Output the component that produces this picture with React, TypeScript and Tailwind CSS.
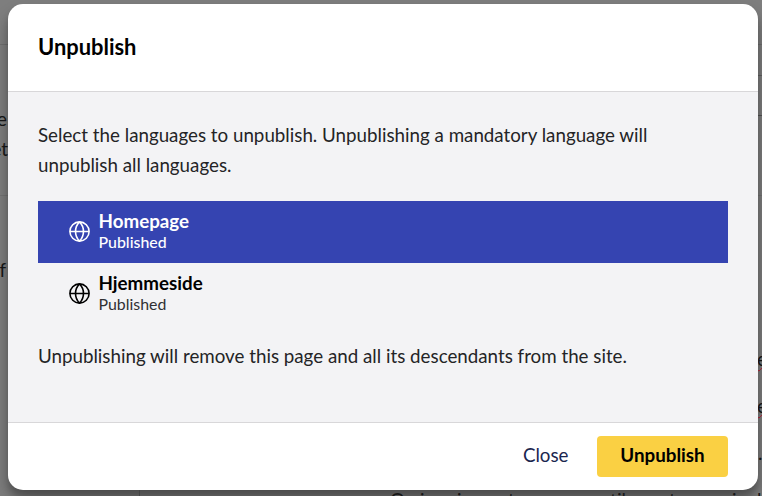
import React from "react";

type Language = { name: string; state: string; selected: boolean };

const languages: Language[] = [
  { name: "Homepage", state: "Published", selected: true },
  { name: "Hjemmeside", state: "Published", selected: false },
];

function Globe() {
  return (
    <svg className="size-[21px] shrink-0" viewBox="0 0 21 21" fill="none" stroke="currentColor" strokeWidth="1.6">
      <circle cx="10.5" cy="10.5" r="9.6" />
      <path d="M0.9 10.5H20.1M10.5 0.9C5.2 6.2 5.2 14.8 10.5 20.1C15.8 14.8 15.8 6.2 10.5 0.9" />
    </svg>
  );
}

function LanguageRow({ name, state, selected }: Language) {
  return (
    <button
      className={`flex h-[62px] w-full items-center gap-[8.5px] pb-[1px] pl-[31px] text-left ${
        selected ? "bg-[#3544b1] text-white" : "text-black"
      }`}
    >
      <Globe />
      <span className="flex flex-col pb-[2px]">
        <span className="text-[18.75px] leading-[21px] font-bold">{name}</span>
        <span className={`text-[15.9px] leading-[21px] ${selected ? "font-medium" : "text-[#303033]"}`}>{state}</span>
      </span>
    </button>
  );
}

function LeftEdge() {
  return (
    <div className="flex w-2 flex-col items-end overflow-hidden">
      <div className="mt-10 h-px w-full shrink-0 bg-[#707070]" />
      <span className="mt-[62px] pr-px">e</span>
      <span className="mt-[6px]">et</span>
      <div className="mt-[34px] h-px w-full shrink-0 bg-[#747474]" />
      <span className="mt-[62px] pr-[2px]">f</span>
    </div>
  );
}

function RightEdge() {
  return (
    <div className="relative -z-10 flex w-1 flex-col overflow-hidden">
      <div className="mt-10 h-px w-full shrink-0 bg-[#707070]" />
      <div className="mt-[30px] h-px w-full shrink-0 bg-[#636363]" />
      <div className="mt-[39px] h-px w-full shrink-0 bg-[#555555]" />
      <div className="mt-[79px] h-px w-full shrink-0 bg-[#747474]" />
      <span className="-ml-px mt-[151px] underline decoration-[#c01830] decoration-wavy decoration-1">e</span>
      <span className="-ml-px mt-[23px] underline decoration-[#c01830] decoration-wavy decoration-1">e</span>
      <span className="mt-[23px]">.</span>
    </div>
  );
}

function BottomEdge() {
  return (
    <div className="flex h-[6px] overflow-hidden">
      <div className="ml-[139px] h-full w-px shrink-0 bg-[#444444]" />
      <p className="ml-[250px] -mt-[2px] flex">
        <span className="w-[30px]">O</span>
        <span className="w-[37px]">i</span>
        <span className="w-[51px]">i</span>
        <span className="w-[102px]">t</span>
        <span className="w-[59px]">til</span>
        <span className="w-[63px]">t</span>
        <span className="w-[25px]">i</span>
        <span>l</span>
      </p>
    </div>
  );
}

export default function App() {
  return (
    <div className="isolate flex h-[496px] w-[762px] flex-col overflow-hidden bg-[#7f7f7f] pt-1 font-['Lato',sans-serif] text-[18.75px] leading-[24px] text-[#171717]">
      <div className="flex h-[486px] shrink-0">
        <LeftEdge />
        <div className="flex w-[750px] shrink-0 flex-col overflow-hidden rounded-[15px] bg-white shadow-[0_12px_25px_rgba(0,0,0,0.24),0_7px_7px_rgba(0,0,0,0.23)]">
          <header className="flex h-[88px] shrink-0 items-center border-b border-[#d8d7d9] px-[30px] pb-px">
            <h1 className="text-[21.9px] leading-[28px] font-bold text-black">Unpublish</h1>
          </header>
          <main className="flex-1 bg-[#f3f3f5] px-[30px] pt-[28px] leading-[30px] text-[#242426]">
            <p>
              Select the languages to unpublish. Unpublishing a mandatory language will
              <br />
              unpublish all languages.
            </p>
            <div className="mt-[21px]">
              {languages.map((language) => (
                <LanguageRow key={language.name} {...language} />
              ))}
            </div>
            <p className="mt-4">Unpublishing will remove this page and all its descendants from the site.</p>
          </main>
          <footer className="flex h-[68px] shrink-0 items-center justify-end gap-[28.5px] border-t border-[#d8d7d9] px-[30px]">
            <button className="pb-[3px] text-[#1b264f]">Close</button>
            <button className="h-[41px] w-[131px] rounded-[4px] bg-[#fad043] pb-[3px] font-bold text-black">
              Unpublish
            </button>
          </footer>
        </div>
        <RightEdge />
      </div>
      <BottomEdge />
    </div>
  );
}
